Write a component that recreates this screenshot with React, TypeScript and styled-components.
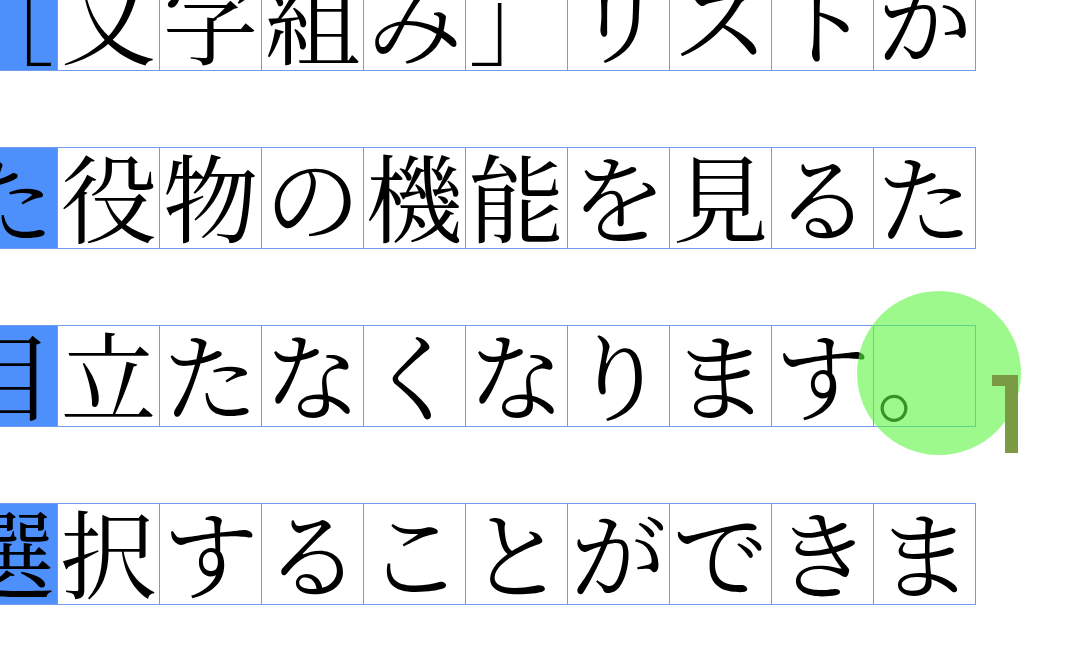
import React from "react";
import styled, { createGlobalStyle } from "styled-components";

const GlobalStyle = createGlobalStyle`
  html, body {
    margin: 0;
    padding: 0;
    background: #ffffff;
    width: 1066px;
    height: 646px;
    overflow: hidden;
  }
`;

const rows: string[][] = [
  ["［", "文", "字", "組", "み", "」", "リ", "ス", "ト", "か"],
  ["た", "役", "物", "の", "機", "能", "を", "見", "る", "た"],
  ["目", "立", "た", "な", "く", "な", "り", "ま", "す", "。"],
  ["選", "択", "す", "る", "こ", "と", "が", "で", "き", "ま"],
];

const App = () => {
  return (
    <>
      <GlobalStyle />
      <Page>
        {rows.map((row, r) => (
          <Row key={r}>
            {row.map((ch, c) => (
              <Cell key={c} selected={c === 0}>
                <Glyph>{ch}</Glyph>
                {r === 2 && c === row.length - 1 && (
                  <>
                    <Spot />
                    <EndMark />
                  </>
                )}
              </Cell>
            ))}
          </Row>
        ))}
      </Page>
    </>
  );
};

const Page = styled.div`
  display: flex;
  flex-direction: column;
  gap: 76px;
  margin-top: -31px;
  margin-left: -45px;
  font-family: "Noto Serif CJK JP", "Noto Sans CJK JP", serif;
  color: #000;
`;

const Row = styled.div`
  display: flex;
`;

const Cell = styled.div<{ selected?: boolean }>`
  position: relative;
  box-sizing: border-box;
  width: 103px;
  height: 102px;
  margin-right: -1px;
  border: 1px solid #6f9de9;
  background: ${(p) => (p.selected ? "#4d8ffb" : "#ffffff")};
  display: flex;
  align-items: center;
  justify-content: center;
`;

const Glyph = styled.span`
  font-size: 96px;
  line-height: 100px;
  font-weight: 400;
  transform: translateY(-4px);
`;

const Spot = styled.div`
  position: absolute;
  left: -17px;
  top: -35px;
  width: 164px;
  height: 164px;
  border-radius: 50%;
  background: rgba(93, 245, 63, 0.6);
  pointer-events: none;
`;

const EndMark = styled.div`
  position: absolute;
  left: 118px;
  top: 49px;
  width: 26px;
  height: 78px;

  &::before {
    content: "";
    position: absolute;
    left: 0;
    top: 0;
    width: 26px;
    height: 11px;
    background: #7a9a44;
  }

  &::after {
    content: "";
    position: absolute;
    left: 13px;
    top: 0;
    width: 13px;
    height: 78px;
    background: #7a9a44;
  }
`;

export default App;
